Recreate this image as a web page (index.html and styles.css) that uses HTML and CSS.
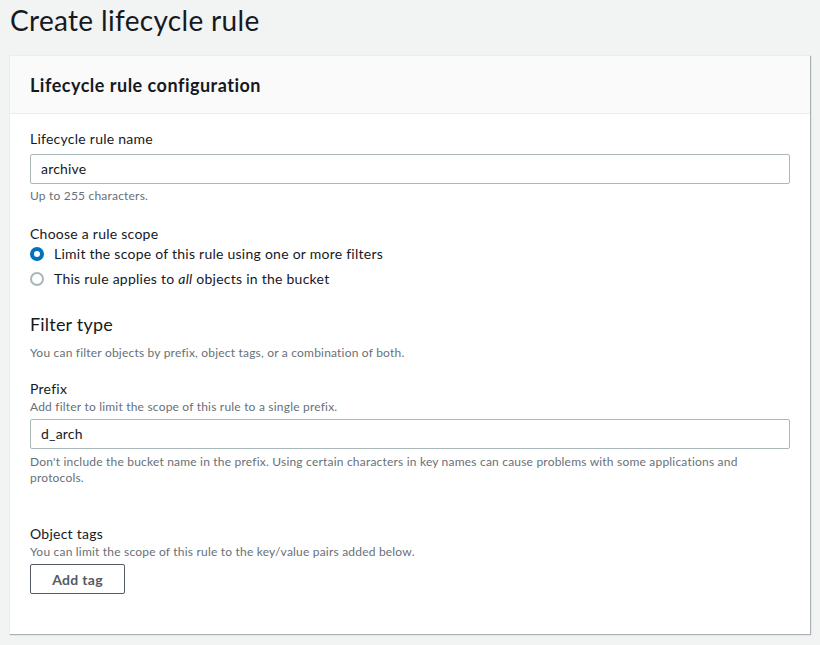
FILE: index.html
```html
<!DOCTYPE html>
<html lang="en">
<head>
<meta charset="utf-8">
<title>Create lifecycle rule</title>
<link rel="stylesheet" href="styles.css">
</head>
<body>
<h1 class="page-title">Create lifecycle rule</h1>
<div class="container">
  <div class="container-header">
    <h2 class="header-title">Lifecycle rule configuration</h2>
  </div>
  <div class="container-body">
    <div class="field field-name">
      <label class="label">Lifecycle rule name</label>
      <div class="input">archive</div>
      <div class="constraint">Up to 255 characters.</div>
    </div>

    <div class="field field-scope">
      <div class="label">Choose a rule scope</div>
      <div class="radio-group">
        <div class="radio-row">
          <span class="radio radio-checked"></span>
          <span class="radio-label">Limit the scope of this rule using one or more filters</span>
        </div>
        <div class="radio-row">
          <span class="radio"></span>
          <span class="radio-label">This rule applies to <i>all</i> objects in the bucket</span>
        </div>
      </div>
    </div>

    <div class="section-filter">
      <h3 class="section-title">Filter type</h3>
      <div class="section-desc">You can filter objects by prefix, object tags, or a combination of both.</div>
    </div>

    <div class="field field-prefix">
      <label class="label">Prefix</label>
      <div class="description">Add filter to limit the scope of this rule to a single prefix.</div>
      <div class="input">d_arch</div>
      <div class="constraint">Don't include the bucket name in the prefix. Using certain characters in key names can cause problems with some applications and protocols.</div>
    </div>

    <div class="field field-tags">
      <div class="label">Object tags</div>
      <div class="description">You can limit the scope of this rule to the key/value pairs added below.</div>
      <button class="button">Add tag</button>
    </div>
  </div>
</div>
</body>
</html>
```

FILE: styles.css
```css
html, body {
  margin: 0;
  padding: 0;
}
body {
  background: #f2f3f3;
  font-family: Lato, "Open Sans", sans-serif;
  color: #16191f;
  width: 820px;
  height: 645px;
  overflow: hidden;
}
.page-title {
  margin: 0;
  padding: 2px 0 0 10px;
  font-size: 28px;
  line-height: 36px;
  font-weight: 400;
  letter-spacing: 0.33px;
  height: 55px;
  box-sizing: border-box;
}
.container {
  margin: 0 10px 0 9px;
  background: #fff;
  border-left: 1px solid #eaeded;
  border-top: 1px solid #eaeded;
  box-shadow: 1px 1px 1px rgba(0, 28, 36, 0.3);
}
.container-header {
  background: #fafafa;
  border-bottom: 1px solid #eaeded;
  height: 58px;
  box-sizing: border-box;
  padding: 0 20px;
  display: flex;
  align-items: center;
}
.header-title {
  margin: 0;
  font-size: 18px;
  font-weight: 700;
  line-height: 22px;
  letter-spacing: 0.5px;
}
.container-body {
  padding: 15px 20px 40px 20px;
}
.label {
  display: block;
  font-size: 14px;
  line-height: 20px;
  letter-spacing: 0.25px;
  color: #16191f;
}
.input {
  margin-top: 5px;
  height: 30px;
  box-sizing: border-box;
  border: 1px solid #aab7b8;
  border-radius: 2px;
  padding: 0 10px;
  font-size: 14px;
  line-height: 28px;
  letter-spacing: 0.2px;
  color: #16191f;
}
.constraint, .description, .section-desc {
  font-size: 12px;
  line-height: 16px;
  letter-spacing: 0.2px;
  color: #687078;
}
.constraint {
  margin-top: 4px;
}
.description {
  margin-top: 0;
}
.field-prefix .input {
  margin-top: 4px;
}
.field-prefix .constraint {
  margin-top: 5px;
}
.field-scope {
  margin-top: 20px;
}
.radio-group {
  display: flex;
  flex-direction: column;
  gap: 5px;
}
.radio-row {
  display: flex;
  align-items: center;
  gap: 10px;
  height: 20px;
}
.radio {
  width: 14px;
  height: 14px;
  border-radius: 50%;
  border: 2px solid #aab7b8;
  box-sizing: border-box;
  flex: none;
}
.radio.radio-checked {
  border: 4px solid #0073bb;
  background: #fff;
}
.radio-label {
  font-size: 14px;
  line-height: 20px;
  letter-spacing: 0.25px;
}
.section-filter {
  margin-top: 23px;
}
.section-title {
  margin: 0;
  font-size: 18px;
  font-weight: 400;
  line-height: 24px;
  letter-spacing: 0.2px;
}
.section-desc {
  margin-top: 9px;
}
.field-prefix {
  margin-top: 18px;
}
.field-tags {
  margin-top: 38px;
}
.button {
  margin-top: 4px;
  display: block;
  width: 95px;
  height: 30px;
  border: 1px solid #545b64;
  border-radius: 2px;
  background: #fff;
  color: #545b64;
  font-family: inherit;
  font-size: 14px;
  font-weight: 700;
  letter-spacing: 0.3px;
  padding: 0;
}
```
